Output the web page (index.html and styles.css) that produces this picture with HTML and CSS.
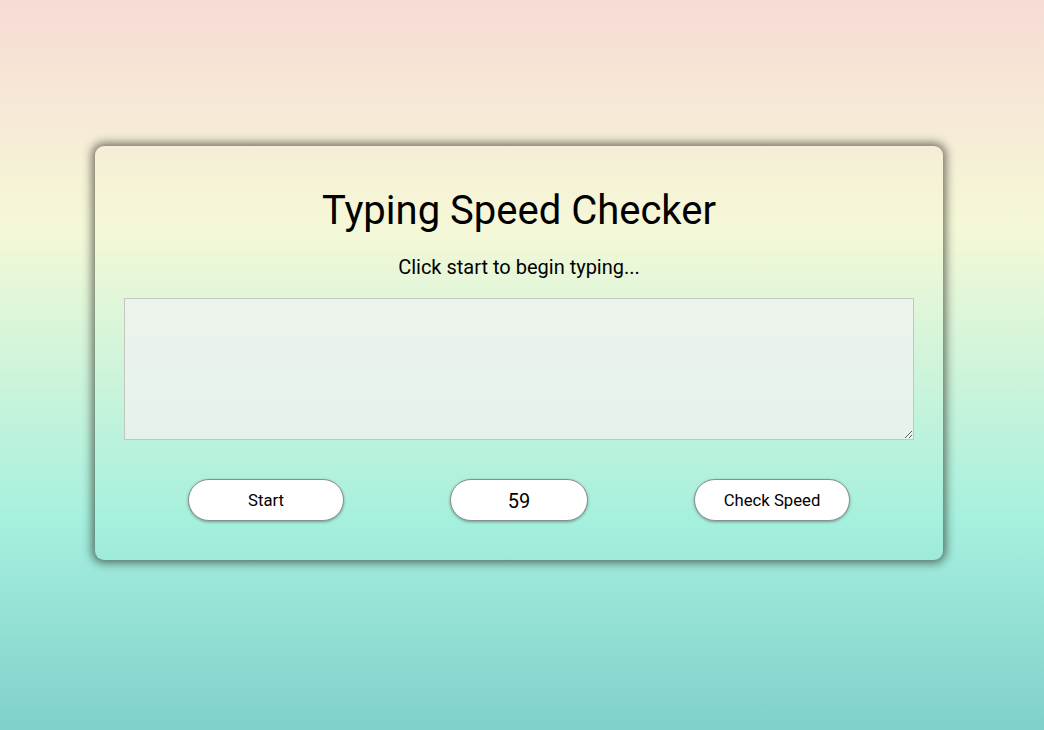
FILE: index.html
```html
<!DOCTYPE html>
<html lang="en">
<head>
<meta charset="utf-8">
<title>Typing Speed Checker</title>
<link rel="stylesheet" href="styles.css">
</head>
<body>
  <main class="card">
    <h1 class="title">Typing Speed Checker</h1>
    <p class="prompt">Click start to begin typing...</p>
    <textarea class="input" aria-label="Typing area"></textarea>
    <div class="controls">
      <button class="btn">Start</button>
      <div class="btn timer">59</div>
      <button class="btn">Check Speed</button>
    </div>
  </main>
</body>
</html>
```

FILE: styles.css
```css
* { box-sizing: border-box; }

html, body {
  height: 100%;
}

body {
  margin: 0;
  font-family: Roboto, "Liberation Sans", sans-serif;
  color: #000;
  background: linear-gradient(to bottom,
    #f7dbd5 0%,
    #f5f8d7 31%,
    #a6f0de 71%,
    #80d0cb 100%);
  display: flex;
  justify-content: flex-start;
  align-items: flex-start;
}

.card {
  margin: 146px 0 0 95px;
  width: 848px;
  height: 414px;
  padding: 0 29px;
  border-radius: 9px;
  box-shadow: 0 0 10px 3px rgba(30, 30, 20, 0.6);
  display: flex;
  flex-direction: column;
  align-items: center;
}

.title {
  margin: 41px 0 0;
  font-size: 40px;
  font-weight: 400;
  line-height: 47px;
}

.prompt {
  margin: 21px 0 0;
  font-size: 20px;
  line-height: 24px;
}

.input {
  margin-top: 19px;
  width: 790px;
  height: 142px;
  border: 1px solid #c3c7c0;
  background: rgba(240, 242, 240, 0.78);
  resize: vertical;
  font-family: inherit;
  font-size: 16px;
  outline: none;
}

.controls {
  margin-top: 39px;
  display: flex;
  justify-content: center;
  gap: 106px;
}

.btn {
  width: 156px;
  height: 42px;
  border: 1px solid #8a8f8c;
  border-radius: 21px;
  background: #fff;
  box-shadow: 0 1px 3px rgba(0, 0, 0, 0.35);
  font-family: Roboto, "Liberation Sans", sans-serif;
  font-size: 16.7px;
  color: #000;
  display: flex;
  align-items: center;
  justify-content: center;
  padding: 0;
  cursor: pointer;
}

.timer {
  width: 138px;
  font-size: 20px;
  padding-top: 2px;
}
```
